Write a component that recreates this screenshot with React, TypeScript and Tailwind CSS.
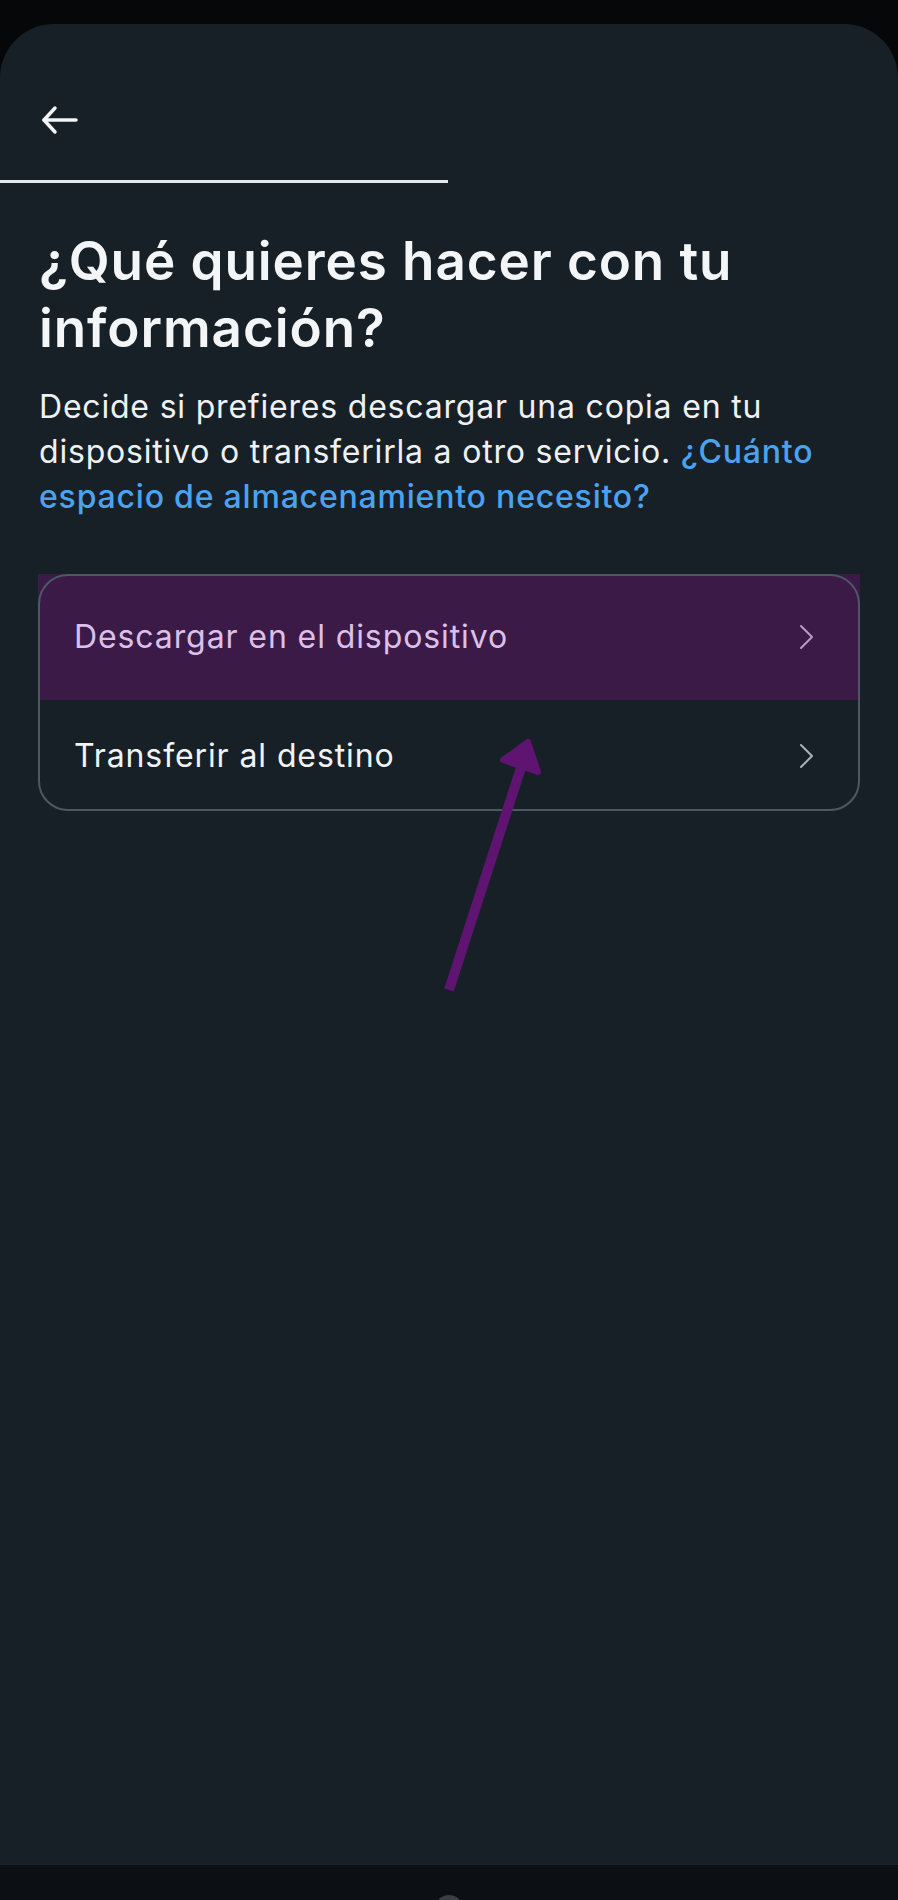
import React from "react";

function Chevron({ color }: { color: string }) {
  return (
    <svg width="18" height="28" viewBox="0 0 18 28" fill="none">
      <path d="M3 3 L14 14 L3 25" stroke={color} strokeWidth="2" strokeLinecap="round" strokeLinejoin="round" />
    </svg>
  );
}

export default function App() {
  return (
    <div className="w-[898px] h-[1900px] bg-[#050709] flex flex-col overflow-hidden" style={{ fontFamily: "Inter, 'Noto Sans', sans-serif" }}>
      <div className="h-[24px] shrink-0" />
      <div className="relative flex-1 bg-[#182027] rounded-t-[54px] flex flex-col">
        <div className="h-[72px] shrink-0" />
        <div className="h-[48px] flex items-center pl-[40px]">
          <svg width="40" height="32" viewBox="0 0 40 32" fill="none">
            <path d="M4 16 H36" stroke="#f2f4f6" strokeWidth="3.5" strokeLinecap="round" />
            <path d="M15 4 L4 16 L15 28" stroke="#f2f4f6" strokeWidth="3.5" strokeLinecap="round" strokeLinejoin="round" />
          </svg>
        </div>
        <div className="h-[36px]" />
        <div className="w-[448px] h-[3px] bg-[#e3e8ec]" />
        <div className="px-[39px] pt-[45px]">
          <h1 className="text-[53px] leading-[67px] font-semibold text-[#f3f5f7] tracking-[0.9px]">
            ¿Qué quieres hacer con tu información?
          </h1>
          <p className="mt-[22px] text-[32px] leading-[45px] text-[#eef1f4] tracking-[0.8px]">
            Decide si prefieres descargar una copia en tu dispositivo o transferirla a otro servicio.{" "}
            <span className="text-[#4ba3ef] font-medium">¿Cuánto espacio de almacenamiento necesito?</span>
          </p>
        </div>
        <div className="mx-[38px] mt-[55px] relative">
          <div className="h-[126px] bg-[#3b1a48] flex items-center justify-between pl-[36px] pr-[44px]">
            <span className="text-[32px] text-[#dcc0e8] tracking-[0.9px]">Descargar en el dispositivo</span>
            <Chevron color="#b89cc4" />
          </div>
          <div className="h-[111px] flex items-center justify-between pl-[36px] pr-[44px]">
            <span className="text-[32px] text-[#f1f4f6] tracking-[0.9px]">Transferir al destino</span>
            <Chevron color="#a9b2ba" />
          </div>
          <div className="absolute inset-0 rounded-[30px] border-2 border-[#4c5964] pointer-events-none" />
        </div>
        <div className="flex-1" />
        <svg className="absolute left-0 top-0 pointer-events-none" width="898" height="1100" viewBox="0 24 898 1100">
          <path d="M449 990 L526 752" stroke="#5f1472" strokeWidth="10" strokeLinecap="butt" />
          <path d="M503 760 L528 742 L538 772 Z" fill="#5f1472" stroke="#5f1472" strokeWidth="6" strokeLinejoin="round" />
        </svg>
      </div>
      <div className="h-[36px] bg-[#0c0f13] flex justify-center items-start shrink-0 border-t border-[#1c2328]">
        <div className="mt-[30px] w-[28px] h-[28px] rounded-full bg-[#3a3d42]" />
      </div>
    </div>
  );
}
